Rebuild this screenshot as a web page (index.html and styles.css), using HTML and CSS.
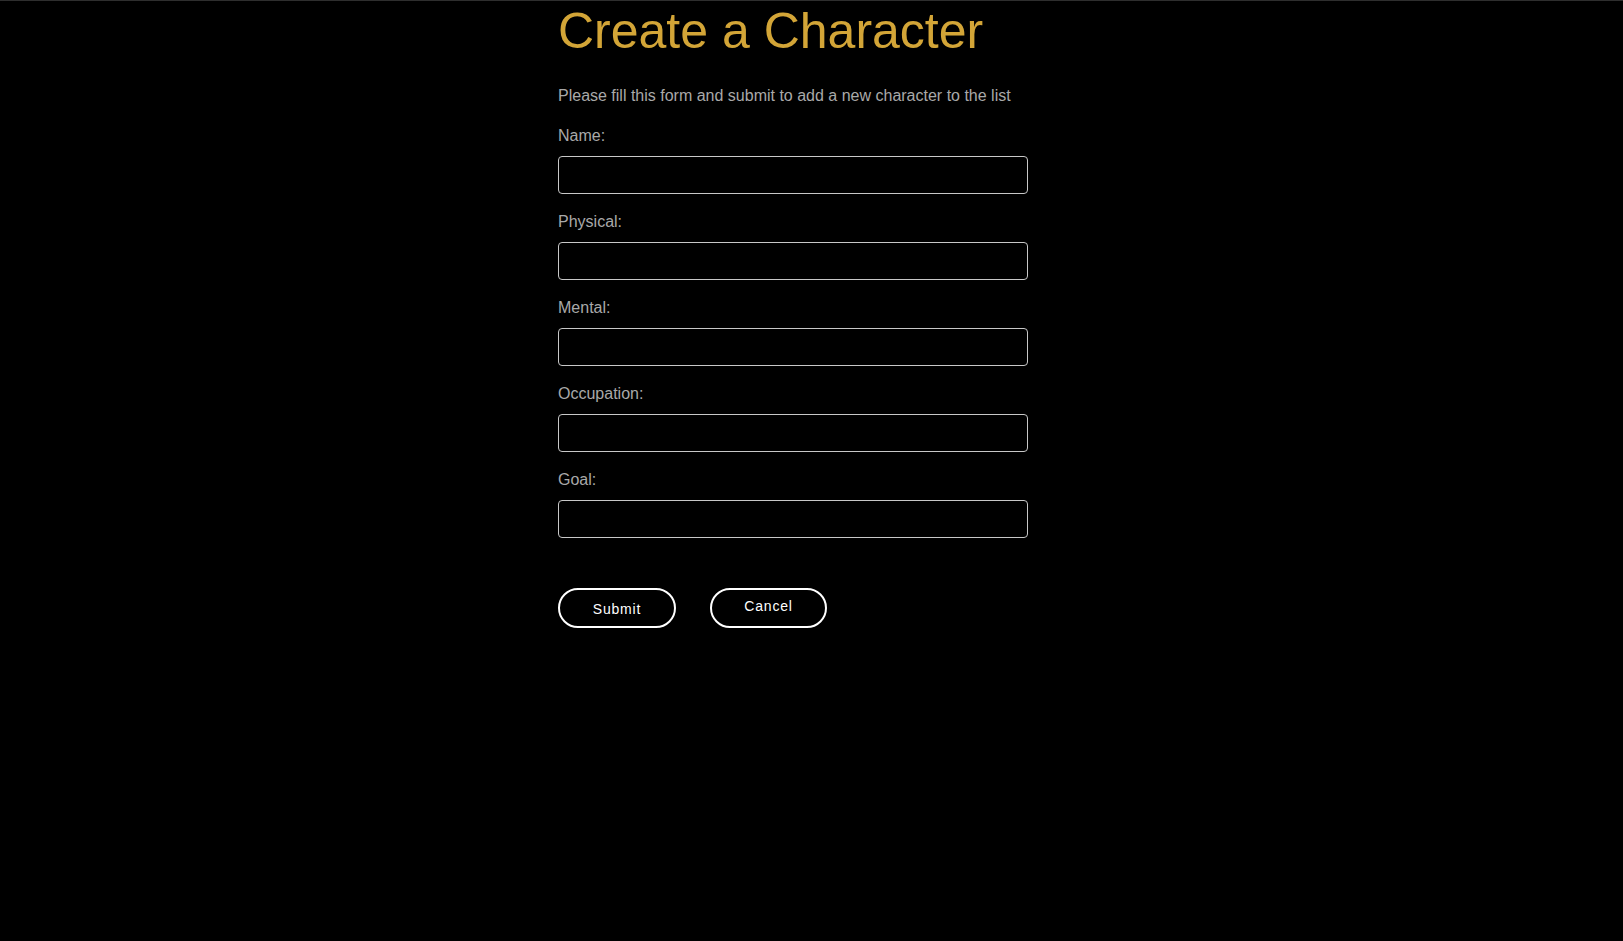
FILE: index.html
```html
<!DOCTYPE html>
<html lang="en">
<head>
<meta charset="utf-8">
<title>Create a Character</title>
<link rel="stylesheet" href="styles.css">
</head>
<body>
<main class="page">
  <h1 class="title">Create a Character</h1>
  <p class="intro">Please fill this form and submit to add a new character to the list</p>
  <form class="form">
    <div class="field">
      <label class="label" for="name">Name:</label>
      <input class="input" id="name" type="text">
    </div>
    <div class="field">
      <label class="label" for="physical">Physical:</label>
      <input class="input" id="physical" type="text">
    </div>
    <div class="field">
      <label class="label" for="mental">Mental:</label>
      <input class="input" id="mental" type="text">
    </div>
    <div class="field">
      <label class="label" for="occupation">Occupation:</label>
      <input class="input" id="occupation" type="text">
    </div>
    <div class="field">
      <label class="label" for="goal">Goal:</label>
      <input class="input" id="goal" type="text">
    </div>
    <div class="actions">
      <button class="btn btn-submit" type="button">Submit</button>
      <a class="btn btn-cancel" href="#">Cancel</a>
    </div>
  </form>
</main>
</body>
</html>
```

FILE: styles.css
```css
html, body {
  margin: 0;
  padding: 0;
  background: #000;
}
body {
  border-top: 1px solid #2e2e2e;
  min-height: 940px;
  font-family: "Liberation Sans", Arial, sans-serif;
  color: #a9a9a9;
}
.page {
  width: 507px;
  margin: 0 auto;
}
.title {
  margin: 2px 0 0;
  font-size: 50px;
  font-weight: normal;
  line-height: 57px;
  color: #d3a537;
}
.intro {
  margin: 27px 0 0;
  font-size: 16px;
  line-height: 18px;
  color: #a9a9a9;
}
.form {
  margin-top: 22px;
}
.field {
  margin-bottom: 19px;
}
.label {
  display: block;
  font-size: 16px;
  line-height: 18px;
  margin-bottom: 11px;
  color: #a9a9a9;
}
.input {
  display: block;
  box-sizing: border-box;
  width: 470px;
  height: 38px;
  margin: 0;
  background: #000;
  border: 1px solid #c8c8c8;
  border-radius: 4px;
  color: #fff;
  font-size: 16px;
  padding: 0 10px;
}
.actions {
  display: flex;
  gap: 34px;
  margin-top: 50px;
}
.btn {
  box-sizing: border-box;
  display: inline-flex;
  align-items: center;
  justify-content: center;
  height: 40px;
  border: 2px solid #fff;
  border-radius: 20px;
  background: #000;
  color: #fff;
  font-family: "Liberation Sans", Arial, sans-serif;
  font-size: 14px;
  letter-spacing: 0.8px;
  text-decoration: none;
  margin: 0;
}
.btn-submit {
  width: 118px;
  padding: 2px 0 0;
}
.btn-cancel {
  width: 117px;
  padding: 0 0 4px;
}
```
